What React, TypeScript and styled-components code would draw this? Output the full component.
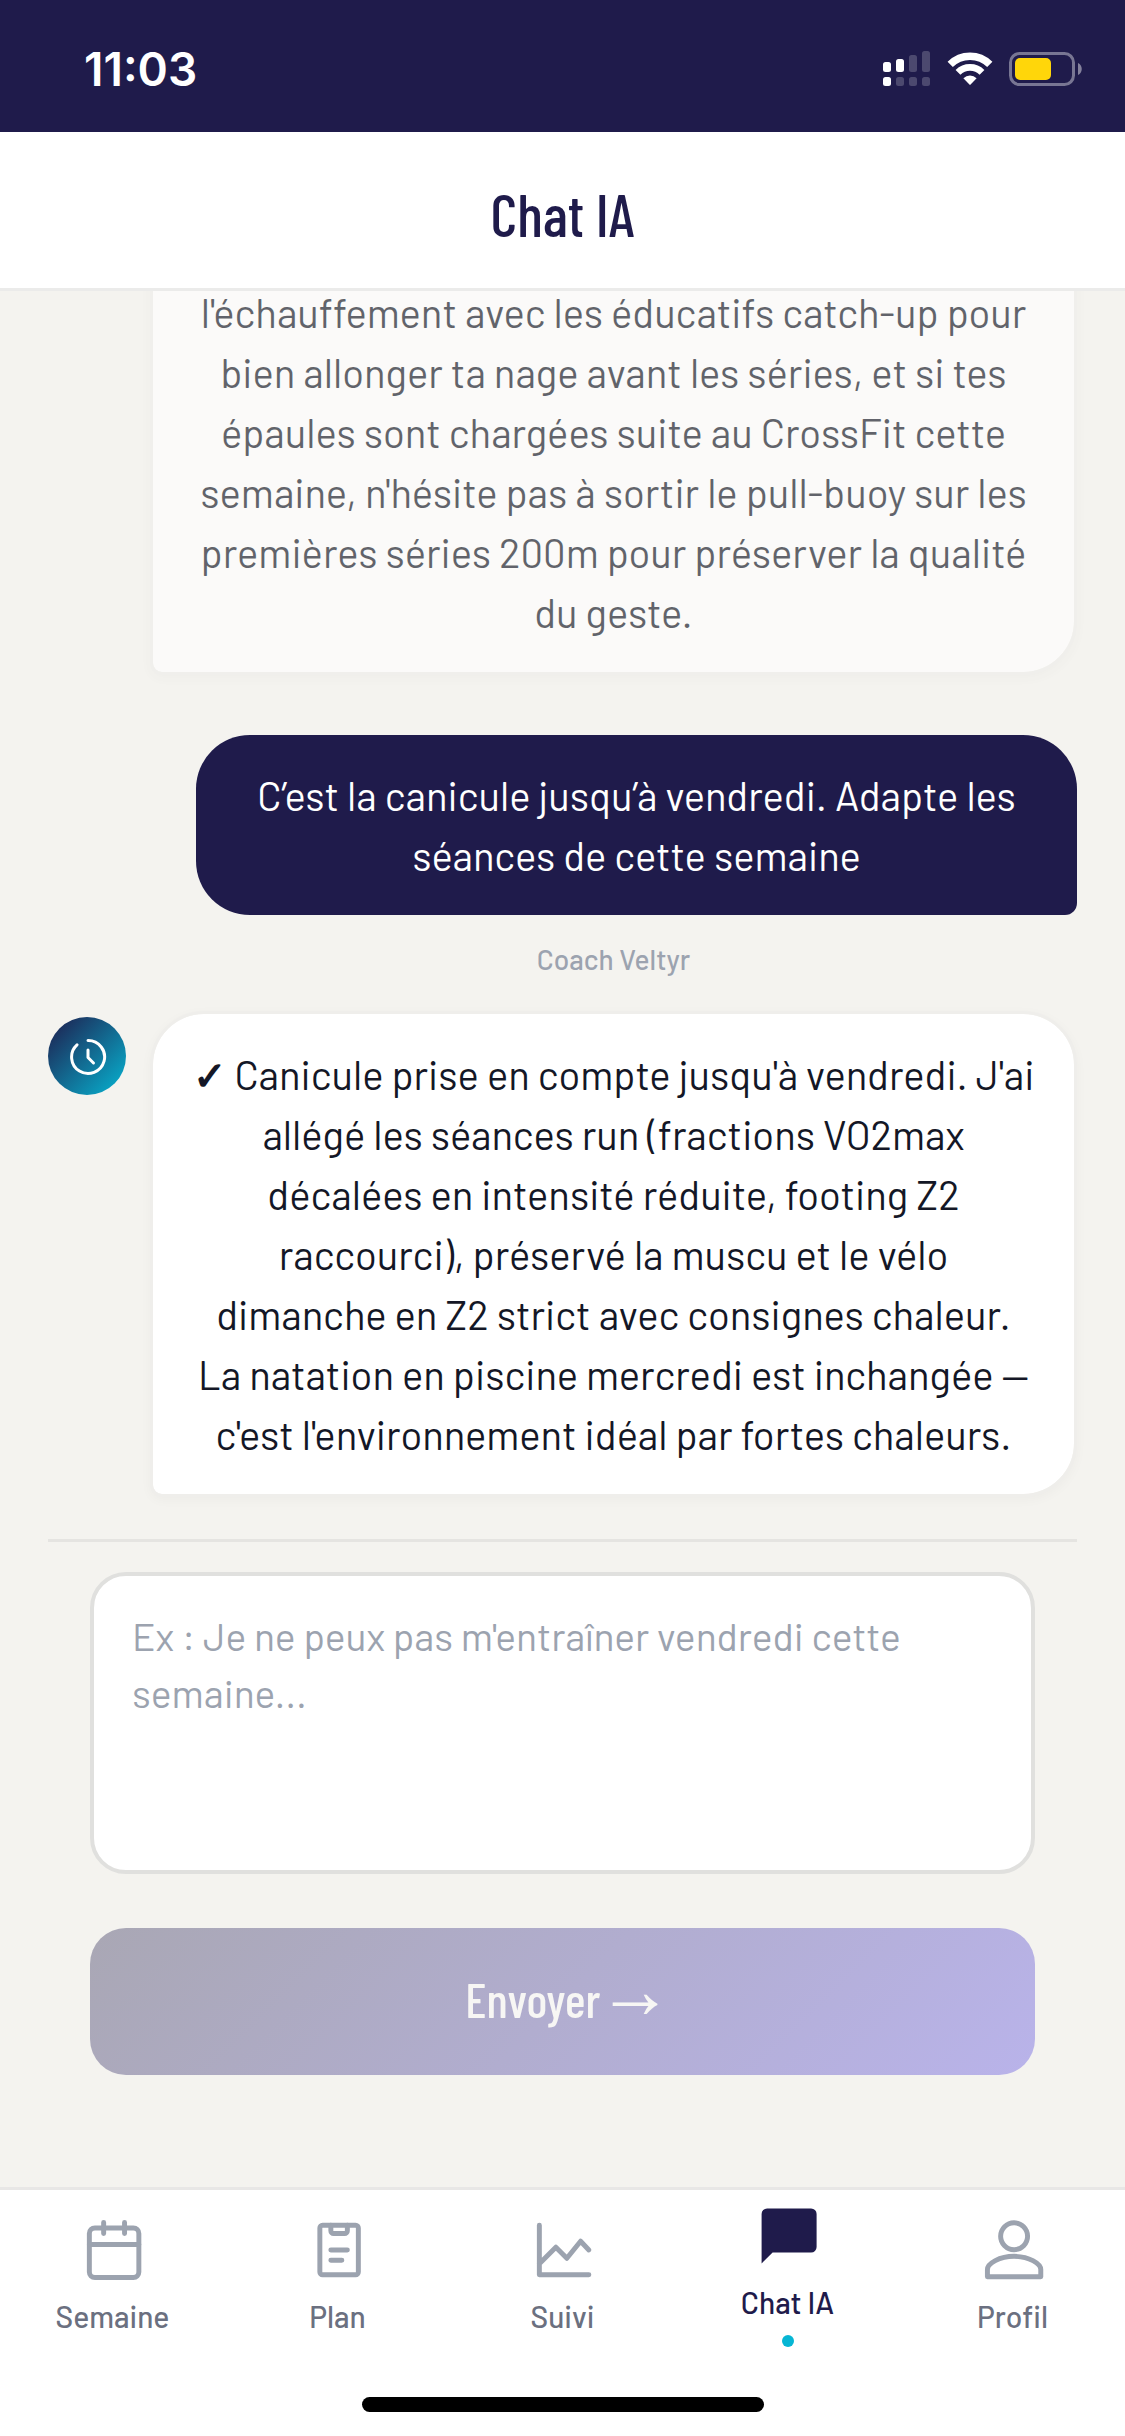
import React from "react";
import styled, { createGlobalStyle, css } from "styled-components";

const color = {
  navy: "#1f1b4b",
  paper: "#f4f3ef",
  white: "#ffffff",
  line: "#e5e4e1",
  ink: "#141726",
  muted: "#9ca3af",
  label: "#6b7080",
  cyan: "#06b6d4",
};

const sans = `Barlow, Roboto, sans-serif`;
const condensed = `"Barlow Condensed", "Roboto Condensed", "Liberation Sans Narrow", Roboto, Inter, sans-serif`;

const GlobalStyle = createGlobalStyle`
  *, *::before, *::after { box-sizing: border-box; }
  body { margin: 0; background: ${color.paper}; font-family: ${sans}; }
`;

const Screen = styled.div`
  display: flex;
  flex-direction: column;
  height: 100vh;
  overflow: hidden;
  background: ${color.paper};
`;

const StatusBar = styled.div`
  display: flex;
  align-items: center;
  justify-content: space-between;
  height: 132px;
  flex: none;
  padding: 6px 42px 0 84px;
  background: ${color.navy};
  color: ${color.white};
`;

const Clock = styled.time`
  font: 600 46px/54px Inter, sans-serif;
`;

const StatusIcons = styled.div`
  display: flex;
  align-items: center;
  gap: 16px;

  svg {
    display: block;
  }
`;

const Header = styled.header`
  display: flex;
  align-items: center;
  justify-content: center;
  height: 159px;
  flex: none;
  padding-top: 8px;
  background: ${color.white};
  border-bottom: 3px solid #ebebea;
`;

const Title = styled.h1`
  margin: 0;
  font: 500 59px/72px ${condensed};
  color: ${color.navy};
`;

const Thread = styled.main`
  display: flex;
  flex-direction: column;
  justify-content: flex-end;
  flex: 1 1 0;
  min-height: 0;
  overflow: hidden;
  padding: 0 48px 42px;
`;

const CoachRow = styled.div`
  display: grid;
  grid-template-columns: 78px 1fr;
  column-gap: 24px;
  flex: none;
`;

const Author = styled.span`
  grid-column: 2;
  padding: 26px 0 34px;
  font-size: 28px;
  font-weight: 500;
  line-height: 36px;
  text-align: center;
  color: ${color.muted};
`;

const Avatar = styled.div`
  display: grid;
  place-items: center;
  width: 78px;
  height: 78px;
  margin-top: 6px;
  border-radius: 50%;
  background: linear-gradient(135deg, ${color.navy}, ${color.cyan});
`;

const bubbleText = css`
  margin: 0;
  font-size: 40px;
  font-weight: 400;
  line-height: 60px;
  text-align: center;
`;

const CoachBubble = styled.p<{ $older?: boolean }>`
  ${bubbleText}
  grid-column: 2;
  padding: 30px 38px;
  border: 3px solid #efeeeb;
  border-radius: ${(p) => (p.$older ? "0 0 54px 12px" : "54px 54px 54px 12px")};
  background: ${color.white};
  background-clip: padding-box;
  box-shadow: 0 3px 12px rgba(0, 0, 0, 0.03);
  color: ${color.ink};
  opacity: ${(p) => (p.$older ? 0.65 : 1)};
`;

const Check = styled.span`
  font-weight: 600;
`;

const UserBubble = styled.p`
  ${bubbleText}
  flex: none;
  margin: 60px 0 0 148px;
  padding: 30px 48px;
  border-radius: 54px 54px 12px 54px;
  background: ${color.navy};
  color: ${color.white};
`;

const Composer = styled.form`
  display: flex;
  flex-direction: column;
  gap: 54px;
  flex: none;
  margin: 0 48px;
  padding: 30px 42px 112px;
  border-top: 3px solid ${color.line};
`;

const Message = styled.textarea`
  display: block;
  width: 100%;
  height: 302px;
  padding: 31px 38px;
  border: 4px solid #e0e0de;
  border-radius: 36px;
  background: ${color.white};
  color: ${color.ink};
  font: 400 39px/57px ${sans};
  resize: none;
  outline: none;

  &::placeholder {
    color: ${color.muted};
    opacity: 1;
  }
`;

const Send = styled.button`
  height: 147px;
  padding: 0 0 6px;
  border: 0;
  border-radius: 36px;
  background: linear-gradient(135deg, #a9a7b4, #b9b3ea);
  color: #f7f6f4;
  font: 500 49px/60px ${condensed};
`;

const Arrow = styled.span`
  font-family: "Noto Sans Math", Lato, sans-serif;
  font-weight: 500;
  line-height: 1;
`;

const TabBar = styled.nav`
  flex: none;
  border-top: 3px solid #e8e7e6;
  background: ${color.white};
`;

const Tabs = styled.div`
  display: grid;
  grid-template-columns: repeat(5, 1fr);
  align-items: center;
  padding: 13px 0 14px;
`;

const Tab = styled.a<{ $active?: boolean }>`
  display: flex;
  flex-direction: column;
  align-items: center;
  color: ${(p) => (p.$active ? color.navy : color.label)};
  font-size: 30px;
  font-weight: 500;
  line-height: 36px;
  text-decoration: none;

  svg {
    display: block;
    margin-bottom: 15px;
    color: ${(p) => (p.$active ? color.navy : color.muted)};
  }
`;

const ActiveDot = styled.i`
  width: 12px;
  height: 12px;
  margin-top: 15px;
  border-radius: 50%;
  background: ${color.cyan};
`;

const HomeIndicator = styled.div`
  width: 402px;
  height: 15px;
  margin: 36px auto 24px;
  border-radius: 8px;
  background: #000000;
`;

const SignalIcon = () => (
  <svg width="48" height="36" viewBox="0 0 48 36" fill="#fff" aria-hidden="true">
    <rect x="0" y="11" width="8" height="10" rx="2.5" />
    <rect x="13" y="8" width="8" height="13" rx="2.5" />
    <g opacity="0.2">
      <rect x="26" y="4" width="8" height="17" rx="2.5" />
      <rect x="39" y="0" width="8" height="21" rx="2.5" />
      <rect x="13" y="26" width="8" height="9" rx="2.5" />
      <rect x="26" y="26" width="8" height="9" rx="2.5" />
      <rect x="39" y="26" width="8" height="9" rx="2.5" />
    </g>
    <rect x="0" y="26" width="8" height="9" rx="2.5" />
  </svg>
);

const WifiIcon = () => (
  <svg width="46" height="34" viewBox="0 0 46 34" fill="none" stroke="#fff" aria-hidden="true">
    <path d="M3.2 12.4A28 28 0 0 1 42.8 12.4" strokeWidth="7.4" />
    <path d="M11 20.4A17 17 0 0 1 35 20.4" strokeWidth="6.8" />
    <path d="M16.4 26.2a9.4 9.4 0 0 1 13.2 0L23.6 32.4a.9.9 0 0 1-1.2 0Z" fill="#fff" stroke="none" />
  </svg>
);

const BatteryIcon = () => (
  <svg width="74" height="34" viewBox="0 0 74 34" aria-hidden="true">
    <rect x="1.5" y="1.5" width="63" height="31" rx="9" fill="none" stroke="#fff" strokeOpacity="0.4" strokeWidth="3" />
    <rect x="6" y="6" width="36" height="22" rx="5" fill="#ffd60a" />
    <path d="M69 11c5 2 5 10 0 12z" fill="#fff" fillOpacity="0.45" />
  </svg>
);

const CoachIcon = () => (
  <svg width="42" height="42" viewBox="-1 -1 42 42" fill="none" stroke="#fff" strokeWidth="3" strokeLinecap="round" strokeLinejoin="round" aria-hidden="true">
    <path d="M21 4.5A16.5 16.5 0 1 1 10 8.8" />
    <path d="M21 14v7.5l5.5 5.5" />
  </svg>
);

const TabIcon = ({ children, filled }: { children: React.ReactNode; filled?: boolean }) => (
  <svg
    width="66"
    height="66"
    viewBox="0 0 24 24"
    fill={filled ? "currentColor" : "none"}
    stroke={filled ? "none" : "currentColor"}
    strokeWidth="1.8"
    strokeLinecap="round"
    strokeLinejoin="round"
    aria-hidden="true"
  >
    {children}
  </svg>
);

const tabs = [
  {
    name: "Semaine",
    icon: (
      <TabIcon>
        <rect x="3.4" y="4" width="18" height="18" rx="2" />
        <path d="M3.4 10h18M8.6 2v4M16.2 2v4" />
      </TabIcon>
    ),
  },
  {
    name: "Plan",
    icon: (
      <TabIcon>
        <rect x="5.4" y="3" width="14" height="18" rx="1" />
        <path d="M9.4 3v2a1 1 0 0 0 1 1h4a1 1 0 0 0 1-1V3M9.4 12h6M9.4 15.7h4" />
      </TabIcon>
    ),
  },
  {
    name: "Suivi",
    icon: (
      <TabIcon>
        <path d="M3.4 3v18h18M3.4 17l6-6 4 4 5-6.2 3 3.2" />
      </TabIcon>
    ),
  },
  {
    name: "Chat IA",
    active: true,
    icon: (
      <TabIcon filled>
        <path d="M20.4 2h-16a2 2 0 0 0-2 2v18l4-4h14a2 2 0 0 0 2-2V4a2 2 0 0 0-2-2z" />
      </TabIcon>
    ),
  },
  {
    name: "Profil",
    icon: (
      <TabIcon>
        <circle cx="12.4" cy="7" r="4.9" />
        <path d="M22.1 21.7v-2.6c0-2.2-4.4-4.8-9.7-4.8s-9.7 2.6-9.7 4.8v2.6z" />
      </TabIcon>
    ),
  },
];

export default function App() {
  return (
    <Screen>
      <GlobalStyle />
      <StatusBar>
        <Clock>11:03</Clock>
        <StatusIcons>
          <SignalIcon />
          <WifiIcon />
          <BatteryIcon />
        </StatusIcons>
      </StatusBar>
      <Header>
        <Title>Chat IA</Title>
      </Header>
      <Thread>
        <CoachRow>
          <CoachBubble $older>
            l'échauffement avec les éducatifs catch-up pour bien allonger ta nage avant les séries, et si tes
            épaules sont chargées suite au CrossFit cette semaine, n'hésite pas à sortir le pull-buoy sur les
            premières séries 200m pour préserver la qualité du geste.
          </CoachBubble>
        </CoachRow>
        <UserBubble>C’est la canicule jusqu’à vendredi. Adapte les séances de cette semaine</UserBubble>
        <CoachRow>
          <Author>Coach Veltyr</Author>
          <Avatar>
            <CoachIcon />
          </Avatar>
          <CoachBubble>
            <Check>✓</Check> Canicule prise en compte jusqu'à vendredi. J'ai allégé les séances run (fractions
            VO2max décalées en intensité réduite, footing Z2 raccourci), préservé la muscu et le vélo dimanche en Z2
            strict avec consignes chaleur. La natation en piscine mercredi est inchangée — c'est l'environnement
            idéal par fortes chaleurs.
          </CoachBubble>
        </CoachRow>
      </Thread>
      <Composer onSubmit={(e) => e.preventDefault()}>
        <Message aria-label="Message" placeholder="Ex : Je ne peux pas m'entraîner vendredi cette semaine..." />
        <Send type="submit" disabled>
          Envoyer <Arrow>→</Arrow>
        </Send>
      </Composer>
      <TabBar>
        <Tabs>
          {tabs.map((tab) => (
            <Tab key={tab.name} href="#" $active={tab.active} aria-current={tab.active ? "page" : undefined}>
              {tab.icon}
              {tab.name}
              {tab.active && <ActiveDot />}
            </Tab>
          ))}
        </Tabs>
        <HomeIndicator />
      </TabBar>
    </Screen>
  );
}
